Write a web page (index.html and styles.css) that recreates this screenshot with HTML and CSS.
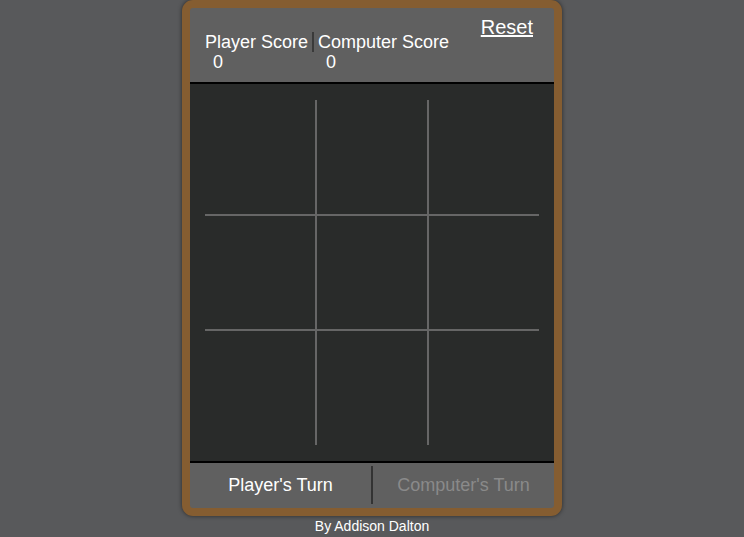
FILE: index.html
```html
<!DOCTYPE html>
<html>
<head>
<meta charset="utf-8">
<link rel="stylesheet" href="styles.css">
</head>
<body>
<div class="card">
  <div class="header">
    <div class="scores">
      <div class="score">
        <div class="label">Player Score</div>
        <div class="value">0</div>
      </div>
      <div class="divider"></div>
      <div class="score">
        <div class="label">Computer Score</div>
        <div class="value">0</div>
      </div>
    </div>
    <a class="reset" href="#">Reset</a>
  </div>
  <div class="board">
    <div class="grid">
      <div class="cell"></div><div class="cell"></div><div class="cell"></div>
      <div class="cell"></div><div class="cell"></div><div class="cell"></div>
      <div class="cell"></div><div class="cell"></div><div class="cell"></div>
    </div>
  </div>
  <div class="footer">
    <div class="turn active">Player's Turn</div>
    <div class="turn-divider"></div>
    <div class="turn">Computer's Turn</div>
  </div>
</div>
<div class="byline">By Addison Dalton</div>
</body>
</html>
```
FILE: styles.css
```css
html, body {
  margin: 0;
  padding: 0;
}
body {
  background: #58595b;
  font-family: "Liberation Sans", Arial, sans-serif;
  color: #fff;
}
.card {
  width: 364px;
  margin: 0 auto;
  border: 8px solid #855d31;
  border-radius: 11px;
  background: #606060;
  box-shadow: 0 0 4px rgba(0, 0, 0, 0.55);
  overflow: hidden;
}
.header {
  height: 76px;
  box-sizing: border-box;
  border-bottom: 2px solid #000;
  display: flex;
  justify-content: space-between;
  align-items: flex-start;
  padding: 0 21px 0 15px;
}
.scores {
  display: flex;
  align-items: flex-start;
  margin-top: 24px;
}
.score {
  display: flex;
  flex-direction: column;
  font-size: 18px;
  line-height: 20px;
}
.value {
  padding-left: 8px;
}
.divider {
  width: 2px;
  height: 20px;
  background: #3a3a3a;
  margin: 0 4px 0 4px;
}
.reset {
  margin-top: 8px;
  font-size: 20px;
  line-height: 23px;
  color: #fff;
  text-decoration: underline;
}
.board {
  height: 379px;
  box-sizing: border-box;
  padding: 16px 15px;
  background: #292b2a;
  border-bottom: 2px solid #000;
}
.grid {
  height: 100%;
  display: grid;
  grid-template-columns: repeat(3, 1fr);
  grid-template-rows: repeat(3, 1fr);
  gap: 2px;
  background: #666;
}
.cell {
  background: #292b2a;
}
.footer {
  height: 45px;
  box-sizing: border-box;
  display: flex;
  align-items: center;
  padding: 3px 0 4px;
}
.turn {
  flex: 1;
  text-align: center;
  font-size: 18px;
  color: #8a8a8a;
}
.turn.active {
  color: #fff;
}
.turn-divider {
  width: 2px;
  align-self: stretch;
  background: #333;
}
.byline {
  margin-top: 2px;
  text-align: center;
  font-size: 14px;
  line-height: 16px;
}
```
